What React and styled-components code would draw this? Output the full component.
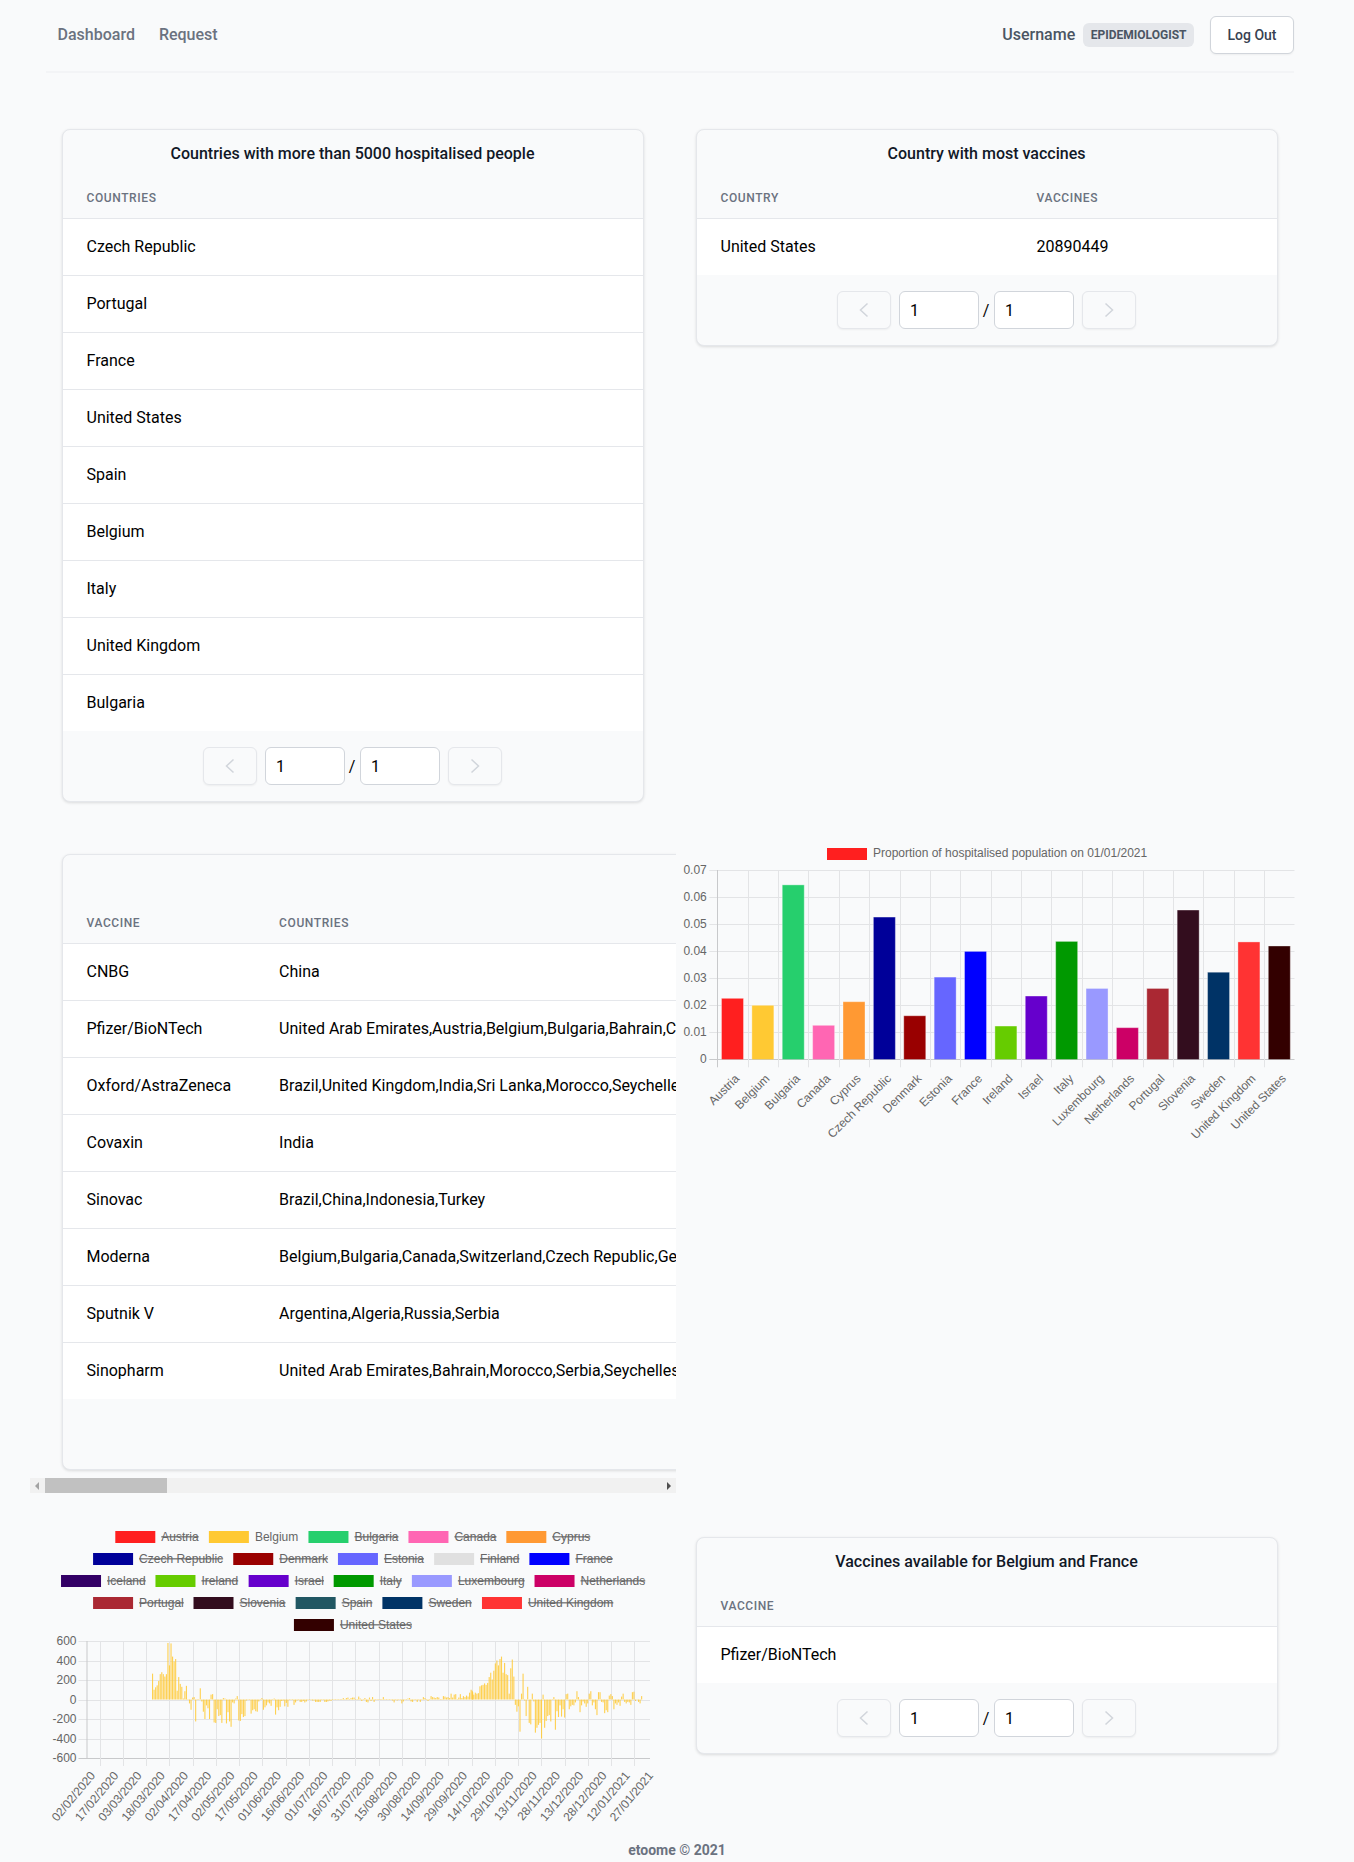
import React from 'react';
import styled, { createGlobalStyle } from 'styled-components';

const GlobalStyle = createGlobalStyle`
  html, body { margin: 0; padding: 0; background: #f9fafb; }
  body { font-family: Roboto, "Noto Sans", sans-serif; color: #000; }
  * { box-sizing: border-box; }
`;

const Page = styled.div`
  width: 1354px;
  height: 1862px;
  overflow: hidden;
  background: #f9fafb;
`;
const Nav = styled.nav`
  margin-left: 46px;
  width: 1248px;
  height: 73px;
  border-bottom: 2px solid #f3f4f6;
  display: flex;
  align-items: center;
  justify-content: space-between;
  padding-bottom: 1px;
`;
const NavLinks = styled.div`display: flex;`;
const NavLink = styled.a`
  padding: 0 12px;
  font-size: 16px;
  font-weight: 500;
  line-height: 24px;
  color: #6b7280;
  &:first-child { margin-left: -0.5px; }
`;
const UserArea = styled.div`display: flex; align-items: center;`;
const UserName = styled.span`
  font-size: 16px;
  font-weight: 500;
  line-height: 24px;
  color: #4b5563;
  margin-right: 8px;
`;
const Badge = styled.span`
  height: 24px;
  line-height: 24px;
  padding: 0 7.5px;
  border-radius: 6px;
  background: #e5e7eb;
  color: #4b5563;
  font-size: 12px;
  font-weight: 700;
  margin-right: 16px;
`;
const LogOut = styled.button`
  width: 84px;
  height: 38px;
  border: 1px solid #d1d5db;
  border-radius: 6px;
  background: #fff;
  color: #374151;
  font-family: inherit;
  font-size: 14px;
  font-weight: 500;
  box-shadow: 0 1px 2px rgba(0,0,0,.05);
  padding: 0;
`;
const Main = styled.main`margin-left: 46px; width: 1248px;`;
const TopRow = styled.section`
  padding-top: 56px;
  display: grid;
  grid-template-columns: 614px 614px;
  column-gap: 20px;
  align-items: start;
`;
const Slot = styled.div`padding: 0 16px 0 16px;`;
const MiddleRow = styled.section`
  margin: 28px 0 0 -16px;
  display: grid;
  grid-template-columns: 646px 618px;
  column-gap: 3px;
  align-items: start;
`;
const BottomRow = styled.section`
  margin: 27px 0 0 -16px;
  display: grid;
  grid-template-columns: 646px 618px;
  column-gap: 3px;
  align-items: start;
`;
const RightSlot = styled.div`padding: 17px 19px 0 17px;`;
const ScrollBox = styled.div`width: 646px;`;
const ScrollView = styled.div`
  overflow: hidden;
  padding: 24px 0 8px 32px;
`;
const Scrollbar = styled.div`
  height: 15px;
  background: #f1f1f1;
  position: relative;
`;
const Thumb = styled.div`
  position: absolute;
  left: 15px;
  top: 0;
  width: 122px;
  height: 15px;
  background: #c1c1c1;
`;
const Arrow = styled.i`
  position: absolute;
  top: 4px;
  width: 0;
  height: 0;
  border-top: 4px solid transparent;
  border-bottom: 4px solid transparent;
  ${p => p.$right
    ? 'right: 5px; border-left: 4px solid #505050;'
    : 'left: 5px; border-right: 4px solid #a3a3a3;'}
`;
const Card = styled.div`
  width: ${p => p.$width || 'auto'};
  background: #f9fafb;
  border: 1px solid #e5e7eb;
  border-radius: 8px;
  box-shadow: 0 1px 3px rgba(0,0,0,.12);
  overflow: hidden;
`;
const CardTitle = styled.h2`
  margin: 0;
  height: 46px;
  padding: 12px 1px 0 0;
  text-align: center;
  font-size: 16px;
  line-height: 24px;
  font-weight: 500;
  color: #111827;
`;
const Table = styled.table`
  width: 100%;
  border-collapse: collapse;
`;
const Th = styled.th`
  width: ${p => p.$w || 'auto'};
  height: 42px;
  padding: 2px 24.5px 0 23.5px;
  text-align: left;
  white-space: nowrap;
  font-size: 12px;
  font-weight: 500;
  letter-spacing: .05em;
  text-transform: uppercase;
  color: #6b7280;
  border-bottom: 1px solid #e5e7eb;
`;
const Tr = styled.tr`
  background: #fff;
  &:not(:last-child) td { border-bottom: 1px solid #e5e7eb; }
`;
const Td = styled.td`
  height: 57px;
  padding: 0 24.5px 0 23.5px;
  font-size: 16px;
  color: #000;
  white-space: nowrap;
`;
const Pager = styled.div`
  height: 70px;
  padding-right: 2px;
  display: flex;
  align-items: center;
  justify-content: center;
`;
const EmptyPager = styled.div`height: 70px;`;
const PagerBtn = styled.button`
  width: 54px;
  height: 38px;
  display: flex;
  align-items: center;
  justify-content: center;
  padding: 0;
  background: #f9fafb;
  border: 1px solid #e5e7eb;
  border-radius: 6px;
  box-shadow: 0 1px 2px rgba(0,0,0,.05);
  margin: ${p => p.$next ? '0 0 0 8px' : '0 8px 0 0'};
`;
const PagerField = styled.input`
  width: 80px;
  height: 38px;
  padding: 0 10.5px;
  background: #fff;
  border: 1px solid #d1d5db;
  border-radius: 6px;
  font-family: inherit;
  font-size: 16px;
  color: #000;
  outline: none;
`;
const Slash = styled.span`
  width: 15px;
  text-align: center;
  font-size: 16px;
  color: #000;
`;
const ChartSvg = styled.svg`display: block;`;
const AxisText = styled.text`
  font-family: "Liberation Sans", Arial, sans-serif;
  font-size: 12px;
  fill: #666;
`;
const LegendText = styled(AxisText)`
  text-decoration: ${p => p.$off ? 'line-through' : 'none'};
`;
const Footer = styled.footer`
  margin-top: -3px;
  text-align: center;
  font-size: 14px;
  font-weight: 700;
  line-height: 20px;
  color: #6b7280;
`;

const Chevron = ({ dir }) => (
  <svg width="10" height="16" viewBox="0 0 10 16" fill="none">
    <path
      d={dir === 'left' ? 'M8.5 1.5 L1.5 8 L8.5 14.5' : 'M1.5 1.5 L8.5 8 L1.5 14.5'}
      stroke="#d1d5db"
      strokeWidth="1.5"
    />
  </svg>
);

const Pagination = () => (
  <Pager>
    <PagerBtn aria-label="previous"><Chevron dir="left" /></PagerBtn>
    <PagerField defaultValue="1" />
    <Slash>/</Slash>
    <PagerField defaultValue="1" />
    <PagerBtn $next aria-label="next"><Chevron dir="right" /></PagerBtn>
  </Pager>
);

const DataCard = ({ title, heads, rows, widths, width, pager = true }) => (
  <Card $width={width}>
    <CardTitle>{title}</CardTitle>
    <Table>
      <thead>
        <tr>{heads.map((h, i) => <Th key={h} $w={widths && widths[i]}>{h}</Th>)}</tr>
      </thead>
      <tbody>
        {rows.map(r => (
          <Tr key={r[0]}>{r.map((c, i) => <Td key={i}>{c}</Td>)}</Tr>
        ))}
      </tbody>
    </Table>
    {pager ? <Pagination /> : <EmptyPager />}
  </Card>
);

const hospitalised = ['Czech Republic', 'Portugal', 'France', 'United States', 'Spain', 'Belgium', 'Italy', 'United Kingdom', 'Bulgaria'].map(c => [c]);
const vaccines = [
  ['CNBG', 'China'],
  ['Pfizer/BioNTech', 'United Arab Emirates,Austria,Belgium,Bulgaria,Bahrain,Canada,Switzerland,Chile,Costa Rica,Cyprus,Czech Republic,Germany'],
  ['Oxford/AstraZeneca', 'Brazil,United Kingdom,India,Sri Lanka,Morocco,Seychelles,Myanmar,Nepal,Bangladesh,Mauritius'],
  ['Covaxin', 'India'],
  ['Sinovac', 'Brazil,China,Indonesia,Turkey'],
  ['Moderna', 'Belgium,Bulgaria,Canada,Switzerland,Czech Republic,Germany,Denmark,Spain,Estonia,Finland,France'],
  ['Sputnik V', 'Argentina,Algeria,Russia,Serbia'],
  ['Sinopharm', 'United Arab Emirates,Bahrain,Morocco,Serbia,Seychelles,Peru,Egypt'],
];

const barData = [
  ['Austria', .02255, '#ff1f1f'], ['Belgium', .01997, '#ffc933'], ['Bulgaria', .0645, '#26cf6d'],
  ['Canada', .01257, '#ff66b3'], ['Cyprus', .0213, '#ff9933'], ['Czech Republic', .0526, '#000099'],
  ['Denmark', .0161, '#990000'], ['Estonia', .0304, '#6666ff'], ['France', .0399, '#0000ff'],
  ['Ireland', .0123, '#66cc00'], ['Israel', .0234, '#6600cc'], ['Italy', .0436, '#009900'],
  ['Luxembourg', .0262, '#9999ff'], ['Netherlands', .0117, '#cc0066'], ['Portugal', .0262, '#aa2833'],
  ['Slovenia', .0552, '#330d1e'], ['Sweden', .0322, '#003366'], ['United Kingdom', .0434, '#ff3333'],
  ['United States', .0419, '#330000'],
];

const GRID = '#e3e4e6';
const AXIS = '#c8c9cb';

const BarChart = () => {
  const ox = 679, oy = 830;
  const left = 717.3 - ox, right = 1294.5 - ox, top = 870 - oy, zero = 1059.3 - oy;
  const step = (right - left) / 19;
  const perUnit = (zero - top) / 0.07;
  const ticks = [0, .01, .02, .03, .04, .05, .06, .07];
  return (
    <ChartSvg width="618" height="330" viewBox="0 0 618 330">
      <rect x={827 - ox} y={848 - oy} width="40" height="12" fill="#ff1f1f" />
      <AxisText x={873 - ox} y={857 - oy}>Proportion of hospitalised population on 01/01/2021</AxisText>
      {ticks.map(t => {
        const y = Math.round(zero - t * perUnit) + .5;
        return (
          <g key={t}>
            <line x1={left - 8} x2={right} y1={y} y2={y} stroke={t === 0 ? AXIS : GRID} />
            <AxisText x={left - 10.5} y={y + 3} textAnchor="end">{t === 0 ? '0' : t.toFixed(2)}</AxisText>
          </g>
        );
      })}
      {barData.map((_, i) => {
        const x = Math.round(left + i * step) + .5;
        return <line key={i} x1={x} x2={x} y1={top} y2={zero + 8} stroke={i === 0 ? AXIS : GRID} />;
      })}
      {barData.map(([name, v, c], i) => {
        const cx = left + (i + .5) * step;
        const y = zero - v * perUnit;
        return (
          <g key={name}>
            <rect x={cx - 11} y={y} width="22" height={zero - y} fill={c} />
            <path d={`M${cx - 11} ${zero} V${y} H${cx + 11} V${zero}`} fill="none" stroke="#fff" strokeOpacity=".35" />
            <AxisText x={cx + 7.5} y={zero + 20} textAnchor="end" transform={`rotate(-45 ${cx + 7.5} ${zero + 20})`}>{name}</AxisText>
          </g>
        );
      })}
    </ChartSvg>
  );
};

const legendRows = [
  [[223, 'Austria', '#ff1f1f', 1], [442, 'Belgium', '#ffc933', 0], [675, 'Bulgaria', '#26cf6d', 1], [909, 'Canada', '#ff66b3', 1], [1138, 'Cyprus', '#ff9933', 1]],
  [[171, 'Czech Republic', '#000099', 1], [499, 'Denmark', '#990000', 1], [744, 'Estonia', '#6666ff', 1], [969, 'Finland', '#e0e0e0', 1], [1192, 'France', '#0000ff', 1]],
  [[96, 'Iceland', '#330066', 1], [317, 'Ireland', '#66cc00', 1], [535, 'Israel', '#6600cc', 1], [734, 'Italy', '#009900', 1], [917, 'Luxembourg', '#9999ff', 1], [1204, 'Netherlands', '#cc0066', 1]],
  [[171, 'Portugal', '#aa2833', 1], [406, 'Slovenia', '#330d1e', 1], [645, 'Spain', '#215763', 1], [848, 'Sweden', '#003366', 1], [1081, 'United Kingdom', '#ff3333', 1]],
  [[641, 'United States', '#330000', 1]],
];

const seg1 = [265,100,125,145,190,260,280,260,235,260,580,350,575,440,390,415,90,230,160,130,10,85,140,5,-40,-105,20,25,-225,5,5,115,-20,-125,-200,-60,-90,-200,50,55,-235,-240,-100,-170,-160,-240,15,10,-245,-130,-225,-280,-30,-40,10,35,-215,-220,-150,-180,-170,-10,-5,-5,-145,-110,-100,-120,-125,-20,5,15,-105,-80,-60,-30,-40,-65,-5,10];
const seg2 = [-155,-80,-110,-75,-15,-10,-70,-35,-75,-5,-5,-5,-55,-30,-10,-5,-25,-25,-15,-30,-20,-5,-5,-5,-10,-10,-25,-25,-25,-25,-5,5,-25,-25,-20,-10,-15,5,5,5,-5,5,-5,5,15,-5,15,20,5,15,20,20,5,5,30,10,-15,5,15,-25,-30,20,-15,25,-25,5,5,5,5,5,25,5,5,5,-5,-5,-10,-30,5,-10,-5,5,-40,-20,5,-5,10,15,-20,-25,5,-5,-25,5,-25,5,25,15,5,-15,5,35,25,20,15,25,20,5,-5,35,30,20,25,15,60,20,50,55,5,20,55,15,35,25,40,30,70,100,75];
const seg3 = [90,50,70,60,65,135,145,150,165,150,170,230,275,205,295,370,400,350,415,440,275,375,260,250,60,320,410,235,-55,-125,-70,-330,60,265,-10,-170,130,-240,-255,60,-20,-340,-290,-260,-240,-400,50,-290,-220,-170,-160,-225,-5,25,-310,-120,-180,-60];
const seg4 = [-175,-100,-185,55,60,-100,-70,-55,-60,-30,85,25,-130,-60,-20,-40,-75,-40,60,85,-60,-30,-100,-160,75,75,-25,-30,-140,-110,-130,40,55,35,-100,-40,-55,-30,-65,30,60,-25,-40,-25,-30,-55,75,80,-15,-5,-25,-40,35];

const lineLabels = ['02/02/2020','17/02/2020','03/03/2020','18/03/2020','02/04/2020','17/04/2020','02/05/2020','17/05/2020','01/06/2020','16/06/2020','01/07/2020','16/07/2020','31/07/2020','15/08/2020','30/08/2020','14/09/2020','29/09/2020','14/10/2020','29/10/2020','13/11/2020','28/11/2020','13/12/2020','28/12/2020','12/01/2021','27/01/2021'];

const DailyChart = () => {
  const ox = 30, oy = 1520;
  const left = 86.5 - ox, right = 650 - ox, y600 = 1641 - oy, y0 = 1699.5 - oy, yMin = 1758 - oy;
  const perUnit = (yMin - y600) / 1200;
  const ticks = [600, 400, 200, 0, -200, -400, -600];
  const bars = [[152, seg1], [275, seg2], [471.7, seg3], [561, seg4]];
  return (
    <ChartSvg width="646" height="323" viewBox="0 0 646 323">
      {legendRows.map((row, r) => row.map(([z, name, c, off]) => {
        const x = 20 + z / 2.34 - ox;
        const y = 11 + r * 22;
        return (
          <g key={name}>
            <rect x={x} y={y} width="40" height="12" fill={c} />
            <LegendText $off={!!off} x={x + 46} y={y + 9.5}>{name}</LegendText>
          </g>
        );
      }))}
      {ticks.map(t => {
        const y = Math.round(y0 - t * perUnit) + .5;
        return (
          <g key={t}>
            <line x1={left - 8} x2={right} y1={y} y2={y} stroke={t === -600 ? AXIS : GRID} />
            <AxisText x={left - 10} y={y + 3} textAnchor="end">{t}</AxisText>
          </g>
        );
      })}
      <line x1={left + .5} x2={left + .5} y1={y600} y2={yMin} stroke={AXIS} />
      {lineLabels.slice(1).map((_, i) => {
        const x = Math.round(99.6 - ox + i * 23.25) + .5;
        return <line key={i} x1={x} x2={x} y1={y600} y2={yMin + 8} stroke={GRID} />;
      })}
      {bars.map(([start, vals]) => vals.map((v, i) => {
        const x = start - ox + i * 1.54;
        const h = Math.abs(v) * perUnit;
        return <rect key={`${start}-${i}`} x={x} y={v > 0 ? y0 - h : y0} width="1.1" height={h} fill="#ffc933" fillOpacity=".85" />;
      }))}
      {lineLabels.map((l, i) => {
        const x = 94.3 - ox + i * 23.25 + 1.5;
        const y = yMin + 18;
        return <AxisText key={l} x={x} y={y} textAnchor="end" transform={`rotate(-50 ${x} ${y})`}>{l}</AxisText>;
      })}
    </ChartSvg>
  );
};

export default function App() {
  return (
    <Page>
      <GlobalStyle />
      <Nav>
        <NavLinks>
          <NavLink>Dashboard</NavLink>
          <NavLink>Request</NavLink>
        </NavLinks>
        <UserArea>
          <UserName>Username</UserName>
          <Badge>EPIDEMIOLOGIST</Badge>
          <LogOut>Log Out</LogOut>
        </UserArea>
      </Nav>
      <Main>
        <TopRow>
          <Slot>
            <DataCard title="Countries with more than 5000 hospitalised people" heads={['Countries']} rows={hospitalised} />
          </Slot>
          <Slot>
            <DataCard title="Country with most vaccines" heads={['Country', 'Vaccines']} widths={['316px', '264px']} rows={[['United States', '20890449']]} />
          </Slot>
        </TopRow>
        <MiddleRow>
          <ScrollBox>
            <ScrollView>
              <DataCard width="3200px" pager={false} title="" heads={['Vaccine', 'Countries']} widths={['1px']} rows={vaccines} />
            </ScrollView>
            <Scrollbar>
              <Arrow />
              <Thumb />
              <Arrow $right />
            </Scrollbar>
          </ScrollBox>
          <BarChart />
        </MiddleRow>
        <BottomRow>
          <DailyChart />
          <RightSlot>
            <DataCard title="Vaccines available for Belgium and France" heads={['Vaccine']} rows={[['Pfizer/BioNTech']]} />
          </RightSlot>
        </BottomRow>
      </Main>
      <Footer>etoome © 2021</Footer>
    </Page>
  );
}
